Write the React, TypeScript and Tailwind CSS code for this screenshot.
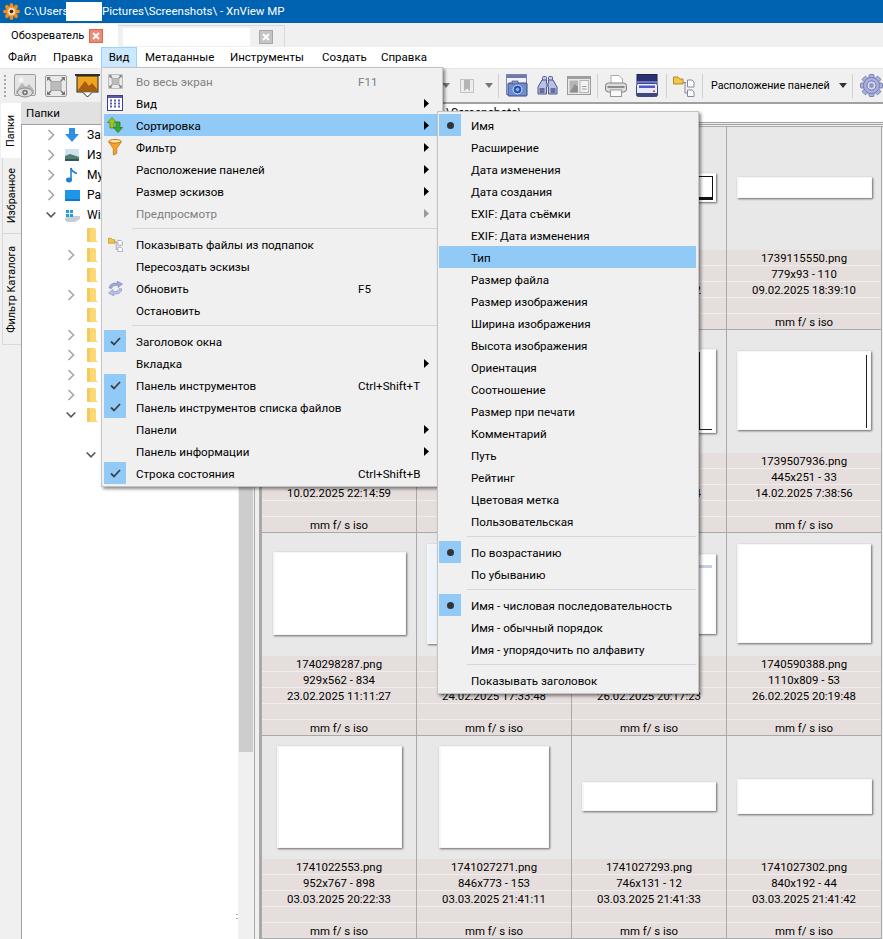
import type { ReactNode } from "react";

type MenuRow = {
  label?: string;
  shortcut?: string;
  arrow?: boolean;
  icon?: ReactNode;
  mark?: "check" | "dot";
  disabled?: boolean;
  active?: boolean;
  separator?: boolean;
};

const Triangle = ({ disabled }: { disabled?: boolean }) => (
  <svg width="5" height="9" viewBox="0 0 5 9">
    <path d="M0 0 L5 4.5 L0 9 Z" fill={disabled ? "#9a9a9a" : "#000"} />
  </svg>
);

const DropArrow = ({ color = "#444" }: { color?: string }) => (
  <svg width="8" height="5" viewBox="0 0 8 5" className="block">
    <path d="M0 0 H8 L4 5 Z" fill={color} />
  </svg>
);

const FullscreenIcon = ({ size = 22 }: { size?: number }) => (
  <svg width={size} height={size} viewBox="0 0 22 22">
    <rect x="0.5" y="0.5" width="21" height="21" rx="1.5" fill="#e9e9e9" stroke="#9a9a9a" />
    <rect x="6" y="6.5" width="10" height="9" fill="#bcbcbc" stroke="#a5a5a5" />
    <path d="M2.5 2.5 L6 6 M19.5 2.5 L16 6 M2.5 19.5 L6 16 M19.5 19.5 L16 16" stroke="#777" strokeWidth="1.6" />
    <path d="M2 2 H6 L2 6 Z M20 2 H16 L20 6 Z M2 20 H6 L2 16 Z M20 20 H16 L20 16 Z" fill="#777" />
  </svg>
);

const PhotoEyeIcon = () => (
  <svg width="22" height="24" viewBox="0 0 22 24">
    <rect x="0.5" y="0.5" width="21" height="21" rx="1.5" fill="#e4e4e4" stroke="#9c9c9c" />
    <path d="M2 17 L8 9 L12 13 L15 10 L20 16 V20 H2 Z" fill="#b8b8b8" />
    <circle cx="7" cy="6" r="2.5" fill="#f5f5f5" />
    <ellipse cx="11" cy="18.5" rx="7.5" ry="4.5" fill="#dcdcdc" stroke="#8c8c8c" />
    <circle cx="11" cy="18.5" r="2.8" fill="#777" />
    <circle cx="11" cy="18.5" r="1.1" fill="#eee" />
  </svg>
);

const ImageScreenIcon = () => (
  <svg width="25" height="24" viewBox="0 0 25 24">
    <rect x="0" y="0" width="25" height="2" fill="#333" />
    <rect x="2" y="2" width="21" height="16" fill="#f1a51f" stroke="#222" />
    <path d="M3 16 L10 7 L14 12 L17 9 L22 15 V17 H3 Z" fill="#a85e10" />
    <path d="M8 18.5 L12.5 23 L17 18.5" fill="#fff" stroke="#222" />
  </svg>
);

const BookmarkIcon = () => (
  <svg width="14" height="14" viewBox="0 0 14 14">
    <rect x="0.5" y="0.5" width="13" height="13" fill="#ededed" stroke="#c3c3c3" />
    <path d="M4 1 H10 V12 L7 9.5 L4 12 Z" fill="#b4b4b4" />
  </svg>
);

const WindowCameraIcon = () => (
  <svg width="22" height="23" viewBox="0 0 22 23">
    <rect x="0.5" y="0.5" width="20" height="20" fill="#eef3fb" stroke="#7d84b0" />
    <rect x="1" y="1" width="19" height="3" fill="#6f78ad" />
    <rect x="2" y="9" width="19" height="13" rx="1" fill="#6d8ed0" stroke="#3c4678" />
    <rect x="6" y="7" width="6" height="3" fill="#8b94c5" stroke="#3c4678" strokeWidth="0.6" />
    <circle cx="11.5" cy="15.5" r="4.4" fill="#2554b0" stroke="#d6e0f5" />
    <circle cx="11.5" cy="15.5" r="1.8" fill="#7fb0f0" />
  </svg>
);

const BinocularsIcon = () => (
  <svg width="21" height="19" viewBox="0 0 21 19">
    <rect x="5.5" y="0.5" width="4" height="4" rx="1" fill="#c6cdea" stroke="#565c90" />
    <rect x="11.5" y="0.5" width="4" height="4" rx="1" fill="#c6cdea" stroke="#565c90" />
    <path d="M5 4 H9.5 V18 H1 V11 Z" fill="#b7c2e6" stroke="#4f5488" />
    <path d="M16 4 H11.5 V18 H20 V11 Z" fill="#b7c2e6" stroke="#4f5488" />
    <rect x="9" y="7" width="3" height="4" fill="#7f86b4" />
    <rect x="2.5" y="12" width="5" height="5" fill="#676da0" />
    <rect x="13.5" y="12" width="5" height="5" fill="#676da0" />
  </svg>
);

const SplitIcon = () => (
  <svg width="24" height="19" viewBox="0 0 24 19">
    <rect x="0.5" y="0.5" width="23" height="18" fill="#e9e9e9" stroke="#9a9a9a" />
    <rect x="0.5" y="0.5" width="23" height="2.5" fill="#9f9f9f" />
    <rect x="2.5" y="4.5" width="8.5" height="12" fill="#b5b5b5" />
    <path d="M2.5 16.5 L8 8 L11 11 V16.5 Z" fill="#8f8f8f" />
    <rect x="13" y="4.5" width="8.5" height="12" fill="#f2f2f2" stroke="#b5b5b5" />
    <rect x="15" y="10" width="4.5" height="1" fill="#9f9f9f" />
    <rect x="15" y="12.5" width="4.5" height="1" fill="#9f9f9f" />
  </svg>
);

const PrinterIcon = () => (
  <svg width="22" height="22" viewBox="0 0 22 22">
    <path d="M6 0.5 H14 L17.5 4 V9 H6 Z" fill="#fff" stroke="#a8a8a8" />
    <rect x="0.5" y="8" width="21" height="9" rx="3" fill="#dcdcdc" stroke="#808080" />
    <rect x="2.5" y="11" width="17" height="2" fill="#8d8d8d" />
    <rect x="5.5" y="15" width="11" height="6.5" fill="#fafafa" stroke="#999" />
  </svg>
);

const ScannerIcon = () => (
  <svg width="22" height="23" viewBox="0 0 22 23">
    <rect x="1" y="0.5" width="20" height="9" fill="#2c3170" stroke="#1f2350" />
    <path d="M1 7 H21 L21 10 H1 Z" fill="#6d75c8" />
    <rect x="0.5" y="9.5" width="21" height="13" rx="2" fill="#e9ecf8" stroke="#40467e" />
    <rect x="3" y="11.5" width="16" height="2.5" fill="#4a57cf" />
    <rect x="0.5" y="19" width="21" height="3.5" rx="1" fill="#41477e" />
    <rect x="17" y="16.5" width="2" height="1.5" fill="#d43a3a" />
  </svg>
);

const FolderTreeIcon = ({ small }: { small?: boolean }) => (
  <svg width={small ? 15 : 22} height={small ? 15 : 22} viewBox="0 0 22 22">
    <path d="M0.5 2 H5 L7 4 H10 V9 H0.5 Z" fill="#f2c64b" stroke="#b88a1e" />
    <path d="M10 7.5 H13 M12 7.5 V18 H14" stroke="#888" fill="none" />
    <path d="M14.5 5 H19 L21 7 V12 H14.5 Z" fill="#fff" stroke="#8289a8" />
    <path d="M14.5 15 H19 L21 17 V21.5 H14.5 Z" fill="#fff" stroke="#8289a8" />
  </svg>
);

const GearIcon = () => (
  <svg width="23" height="23" viewBox="0 0 23 23">
    <g fill="#a9b1dc" stroke="#6a70a8" strokeWidth="0.8">
      {[0, 45, 90, 135, 180, 225, 270, 315].map((a) => (
        <rect key={a} x="9" y="0.5" width="5" height="5" rx="1" transform={`rotate(${a} 11.5 11.5)`} />
      ))}
      <circle cx="11.5" cy="11.5" r="8" />
    </g>
    <circle cx="11.5" cy="11.5" r="4.6" fill="#d9dcf0" stroke="#6a70a8" />
    <circle cx="11.5" cy="11.5" r="2.4" fill="#8f95c4" />
  </svg>
);

const GridViewIcon = () => (
  <svg width="16" height="16" viewBox="0 0 16 16">
    <rect x="0.5" y="0.5" width="15" height="15" fill="#fff" stroke="#3f3f8c" />
    <rect x="1" y="1" width="14" height="2" fill="#5a5aa8" />
    {[4.5, 7.5, 10.5].map((y) =>
      [3, 7, 11].map((x) => <rect key={`${x}-${y}`} x={x} y={y} width="2" height="2" fill="#5757c0" />)
    )}
  </svg>
);

const SortIcon = () => (
  <svg width="16" height="16" viewBox="0 0 16 16">
    <path d="M5 0.5 L9.5 5.5 H7 V11 H3 V5.5 H0.5 Z" fill="#9ac81e" stroke="#4f7a10" strokeWidth="0.7" />
    <path d="M11 15.5 L6.5 10.5 H9 V5 H13 V10.5 H15.5 Z" fill="#3ca82c" stroke="#20701c" strokeWidth="0.7" />
  </svg>
);

const FunnelIcon = () => (
  <svg width="14" height="17" viewBox="0 0 14 17">
    <ellipse cx="7" cy="2.5" rx="6.3" ry="2" fill="#ffe89a" stroke="#c4761a" />
    <path d="M0.8 3 L5.3 9.5 V16 L8.7 14.5 V9.5 L13.2 3 Q7 5.5 0.8 3 Z" fill="#f4a42a" stroke="#b66a14" strokeWidth="0.7" />
  </svg>
);

const RefreshIcon = () => (
  <svg width="15" height="15" viewBox="0 0 15 15">
    <path d="M1 7 Q2 2 7.5 2 L10 2 L9 0 L14.5 3 L10 6.5 L10 4.5 L7.5 4.5 Q4.5 4.5 3.5 7.5 Z" fill="#9fa8dc" stroke="#7078b4" strokeWidth="0.5" />
    <path d="M14 8 Q13 13 7.5 13 L5 13 L6 15 L0.5 12 L5 8.5 L5 10.5 L7.5 10.5 Q10.5 10.5 11.5 7.5 Z" fill="#bcc2e8" stroke="#7078b4" strokeWidth="0.5" />
  </svg>
);

const Logo = () => (
  <svg width="17" height="17" viewBox="0 0 17 17">
    {[0, 45, 90, 135, 180, 225, 270, 315].map((a) => (
      <ellipse key={a} cx="8.5" cy="2.6" rx="2" ry="2.6" fill="#f08a1e" transform={`rotate(${a} 8.5 8.5)`} />
    ))}
    <circle cx="8.5" cy="8.5" r="5" fill="#f5a030" />
    <circle cx="8.5" cy="8.5" r="3.2" fill="#fff" />
    <circle cx="8.5" cy="8.5" r="2" fill="#5a2a0a" />
  </svg>
);

const Close = ({ red }: { red?: boolean }) => (
  <div
    className={
      red
        ? "flex h-[14px] w-[14px] items-center justify-center border border-[#d9674e] bg-[#ee8a73]"
        : "flex h-[14px] w-[14px] items-center justify-center border border-[#a8a8a8] bg-[#c4c4c4]"
    }
  >
    <svg width="8" height="8" viewBox="0 0 8 8">
      <path d="M1 1 L7 7 M7 1 L1 7" stroke="#fff" strokeWidth="2" />
    </svg>
  </div>
);

const ChevronRight = () => (
  <svg width="8" height="12" viewBox="0 0 8 12">
    <path d="M1.5 1 L6.5 6 L1.5 11" fill="none" stroke="#a6a6a6" strokeWidth="1.6" />
  </svg>
);

const ChevronDown = () => (
  <svg width="10" height="8" viewBox="0 0 10 8">
    <path d="M0.7 1.5 L5 5.8 L9.3 1.5" fill="none" stroke="#555" strokeWidth="1.6" />
  </svg>
);

const Folder = () => (
  <svg width="11" height="16" viewBox="0 0 11 16">
    <path d="M0 1 H8 L9 3 V13 L11 15 H0 Z" fill="#fcd975" />
    <path d="M0 1 H3 V15 H0 Z" fill="#f4c95d" />
  </svg>
);

const DownloadsIcon = () => (
  <svg width="14" height="14" viewBox="0 0 14 14">
    <path d="M4 0 H10 V6 H14 L7 14 L0 6 H4 Z" fill="#2f8fe4" />
  </svg>
);

const PicturesIcon = () => (
  <svg width="14" height="12" viewBox="0 0 14 12">
    <rect width="14" height="12" fill="#cfe3ee" />
    <path d="M0 7 L5 5 L14 8 V12 H0 Z" fill="#4f7f66" />
    <rect y="10" width="14" height="2" fill="#34506b" />
  </svg>
);

const MusicIcon = () => (
  <svg width="12" height="16" viewBox="0 0 12 16">
    <path d="M5 1 V12.5" stroke="#1f7fd8" strokeWidth="1.6" />
    <path d="M5 1 Q6 5 11 6.5" fill="none" stroke="#1f7fd8" strokeWidth="1.6" />
    <ellipse cx="3" cy="13" rx="3" ry="2.4" fill="#1f7fd8" />
  </svg>
);

const DesktopIcon = () => (
  <svg width="15" height="11" viewBox="0 0 15 11">
    <rect width="15" height="11" fill="#1d96e8" />
    <rect y="9" width="15" height="2" fill="#0f78c4" />
  </svg>
);

const DriveIcon = () => (
  <svg width="15" height="13" viewBox="0 0 15 13">
    <path d="M0 9 L5 7 H15 V10 L10 13 H2 L0 11 Z" fill="#c8cdd4" />
    <rect x="1" y="1" width="3" height="3" fill="#19a0e8" />
    <rect x="5" y="1" width="3" height="3" fill="#19a0e8" />
    <rect x="1" y="5" width="3" height="3" fill="#19a0e8" />
    <rect x="5" y="5" width="3" height="3" fill="#19a0e8" />
  </svg>
);

const viewMenu: MenuRow[] = [
  { label: "Во весь экран", shortcut: "F11", disabled: true, icon: <FullscreenIcon size={15} /> },
  { label: "Вид", arrow: true, icon: <GridViewIcon /> },
  { label: "Сортировка", arrow: true, active: true, icon: <SortIcon /> },
  { label: "Фильтр", arrow: true, icon: <FunnelIcon /> },
  { label: "Расположение панелей", arrow: true },
  { label: "Размер эскизов", arrow: true },
  { label: "Предпросмотр", arrow: true, disabled: true },
  { separator: true },
  { label: "Показывать файлы из подпапок", icon: <FolderTreeIcon small /> },
  { label: "Пересоздать эскизы" },
  { label: "Обновить", shortcut: "F5", icon: <RefreshIcon /> },
  { label: "Остановить" },
  { separator: true },
  { label: "Заголовок окна", mark: "check" },
  { label: "Вкладка", arrow: true },
  { label: "Панель инструментов", shortcut: "Ctrl+Shift+T", mark: "check" },
  { label: "Панель инструментов списка файлов", mark: "check" },
  { label: "Панели", arrow: true },
  { label: "Панель информации", arrow: true },
  { label: "Строка состояния", shortcut: "Ctrl+Shift+B", mark: "check" },
];

const sortMenu: MenuRow[] = [
  { label: "Имя", mark: "dot" },
  { label: "Расширение" },
  { label: "Дата изменения" },
  { label: "Дата создания" },
  { label: "EXIF: Дата съёмки" },
  { label: "EXIF: Дата изменения" },
  { label: "Тип", active: true },
  { label: "Размер файла" },
  { label: "Размер изображения" },
  { label: "Ширина изображения" },
  { label: "Высота изображения" },
  { label: "Ориентация" },
  { label: "Соотношение" },
  { label: "Размер при печати" },
  { label: "Комментарий" },
  { label: "Путь" },
  { label: "Рейтинг" },
  { label: "Цветовая метка" },
  { label: "Пользовательская" },
  { separator: true },
  { label: "По возрастанию", mark: "dot" },
  { label: "По убыванию" },
  { separator: true },
  { label: "Имя - числовая последовательность", mark: "dot" },
  { label: "Имя - обычный порядок" },
  { label: "Имя - упорядочить по алфавиту" },
  { separator: true },
  { label: "Показывать заголовок" },
];

function MenuItem({ row, wide }: { row: MenuRow; wide?: boolean }) {
  if (row.separator) {
    return (
      <div className="flex h-[9px] items-center pl-[28px]">
        <div className="h-px w-full bg-[#d7d7d7]" />
      </div>
    );
  }
  return (
    <div
      className={`flex h-[22px] items-center text-[11.6px] ${row.active ? "bg-[#91c9f7]" : ""} ${
        row.disabled ? "text-[#808080]" : "text-black"
      }`}
    >
      <div
        className={`flex h-[22px] w-[22px] shrink-0 items-center justify-center ${
          row.mark ? "bg-[#91c9f7]" : ""
        }`}
      >
        {row.icon}
        {row.mark === "check" && (
          <svg width="11" height="9" viewBox="0 0 11 9">
            <path d="M1 4.5 L4 7.5 L10 1" fill="none" stroke="#404040" strokeWidth="1.8" />
          </svg>
        )}
        {row.mark === "dot" && <div className="h-[7px] w-[7px] rounded-full bg-[#333]" />}
      </div>
      <div className={wide ? "ml-[10px] w-[222px] whitespace-nowrap pt-[3px]" : "ml-[10px] whitespace-nowrap pt-[3px]"}>{row.label}</div>
      {wide && <div className="w-[66px] whitespace-nowrap pt-[3px]">{row.shortcut}</div>}
      {row.arrow && <Triangle disabled={row.disabled} />}
    </div>
  );
}

type Shot = {
  name?: string;
  size?: string;
  date?: string;
  w: number;
  h: number;
  body?: ReactNode;
};

const shots: Shot[] = [
  { w: 0, h: 0 },
  { w: 0, h: 0 },
  {
    date: "09.02.2025 18:38:42",
    w: 134,
    h: 29,
    body: <div className="ml-auto mr-[2px] mt-[2px] h-[24px] w-[16px] border border-b-[3px] border-[#111] bg-white" />,
  },
  { name: "1739115550.png", size: "779x93 - 110", date: "09.02.2025 18:39:10", w: 135, h: 21 },
  { date: "10.02.2025 22:14:59", w: 0, h: 0 },
  { w: 0, h: 0 },
  {
    date: "13.02.2025 22:11:14",
    w: 134,
    h: 84,
    body: <div className="ml-auto mr-[3px] mt-[2px] h-[78px] w-[15px] border-b border-l-[3px] border-[#1a1a1a]" />,
  },
  {
    name: "1739507936.png",
    size: "445x251 - 33",
    date: "14.02.2025 7:38:56",
    w: 134,
    h: 79,
    body: <div className="ml-auto mr-[3px] mt-[3px] h-[73px] w-px bg-[#222]" />,
  },
  { name: "1740298287.png", size: "929x562 - 834", date: "23.02.2025 11:11:27", w: 133, h: 83 },
  { date: "24.02.2025 17:33:48", w: 134, h: 100, body: <div className="h-full w-full bg-[#eef3fa]" /> },
  {
    date: "26.02.2025 20:17:23",
    w: 134,
    h: 80,
    body: <div className="ml-auto mr-[3px] mt-[10px] h-[3px] w-[16px] bg-[#c5cfe2]" />,
  },
  { name: "1740590388.png", size: "1110x809 - 53", date: "26.02.2025 20:19:48", w: 134, h: 99 },
  { name: "1741022553.png", size: "952x767 - 898", date: "03.03.2025 20:22:33", w: 125, h: 102 },
  { name: "1741027271.png", size: "846x773 - 153", date: "03.03.2025 21:41:11", w: 110, h: 102 },
  { name: "1741027293.png", size: "746x131 - 12", date: "03.03.2025 21:41:33", w: 134, h: 29 },
  { name: "1741027302.png", size: "840x192 - 44", date: "03.03.2025 21:41:42", w: 135, h: 35 },
];

function Label({ text, last }: { text?: string; last?: boolean }) {
  return (
    <div
      className={`flex items-center justify-center whitespace-nowrap bg-[#e6dedc] pt-[3px] text-[11.4px] leading-none ${
        last ? "h-[15px]" : "h-[16px] border-b border-[#eeeeee]"
      }`}
    >
      {text}
    </div>
  );
}

function Cell({ shot }: { shot: Shot }) {
  return (
    <div className="flex h-[203px] flex-col border-b border-r border-[#a9a9a9]">
      <div className="flex h-[123px] items-center justify-center bg-[#e8e8e8] pb-[2px]">
        {shot.w > 0 && (
          <div
            className="border-b border-l-2 border-r border-t border-[#f6f6f6] bg-white shadow-[1px_1px_2px_rgba(0,0,0,0.55)]"
            style={{ width: shot.w, height: shot.h }}
          >
            {shot.body}
          </div>
        )}
      </div>
      <Label text={shot.name} />
      <Label text={shot.size} />
      <Label text={shot.date} />
      <Label />
      <Label text="mm f/ s iso" last />
    </div>
  );
}

function TreeRow({ indent, chevron, icon, label }: { indent: string; chevron?: "right" | "down"; icon?: ReactNode; label?: string }) {
  return (
    <div className={`flex h-[20px] items-center whitespace-nowrap ${indent}`}>
      <div className="flex w-[10px] shrink-0 items-center justify-center">
        {chevron === "right" && <ChevronRight />}
        {chevron === "down" && <ChevronDown />}
      </div>
      <div className="ml-[8px] flex w-[16px] shrink-0 items-center justify-center">{icon}</div>
      {label && <span className="ml-[7px]">{label}</span>}
    </div>
  );
}

const ToolSep = ({ className }: { className: string }) => <div className={`h-[24px] w-px bg-[#d0d0d0] ${className}`} />;

export default function App() {
  return (
    <div className="relative flex h-[939px] w-[883px] flex-col overflow-hidden bg-[#f0f0f0] font-['Roboto',sans-serif] text-[12px] leading-none text-black">
      {/* title bar */}
      <div className="flex h-[23px] shrink-0 items-center bg-[#0063b1] pl-[3px] text-[11.5px] text-white">
        <Logo />
        <span className="ml-[4px] w-[42px] whitespace-nowrap">C:\Users</span>
        <div className="h-[19px] w-[36px] bg-white" />
        <span>Pictures\Screenshots\ - XnView MP</span>
      </div>

      {/* tabs */}
      <div className="flex h-[24px] shrink-0 items-end">
        <div className="flex h-[23px] w-[118px] items-center bg-white pl-[11px]">
          <span className="w-[78px] whitespace-nowrap text-[11.1px]">Обозреватель</span>
          <Close red />
        </div>
        <div className="flex h-[22px] w-[167px] items-center border-r border-t border-[#d9d9d9] pl-[5px]">
          <div className="h-[18px] w-[127px] bg-white" />
          <div className="ml-[9px]">
            <Close />
          </div>
        </div>
      </div>

      {/* menu bar */}
      <div className="flex h-[21px] shrink-0 items-center bg-white text-[11.5px]">
        <span className="ml-[8px] w-[45px]">Файл</span>
        <span className="w-[48px]">Правка</span>
        <div className="flex h-[21px] w-[36px] items-center justify-center border border-[#99d1ff] bg-[#cce8ff]">Вид</div>
        <span className="ml-[8px] w-[85px]">Метаданные</span>
        <span className="w-[92px]">Инструменты</span>
        <span className="w-[59px]">Создать</span>
        <span>Справка</span>
      </div>

      {/* toolbar */}
      <div className="flex h-[34px] shrink-0 items-center border-t border-[#e8e8e8]">
        <div className="ml-[4px] h-[22px] w-[2px] border-l-2 border-dotted border-[#a8a8a8]" />
        <div className="ml-[8px]">
          <PhotoEyeIcon />
        </div>
        <div className="ml-[9px]">
          <FullscreenIcon />
        </div>
        <div className="ml-[8px]">
          <ImageScreenIcon />
        </div>
        <div className="ml-auto flex items-center">
          <DropArrow color="#777" />
          <div className="ml-[10px]">
            <BookmarkIcon />
          </div>
          <div className="ml-[11px]">
            <DropArrow color="#777" />
          </div>
          <ToolSep className="ml-[5px]" />
          <div className="ml-[7px]">
            <WindowCameraIcon />
          </div>
          <div className="ml-[9px]">
            <BinocularsIcon />
          </div>
          <div className="ml-[9px]">
            <SplitIcon />
          </div>
          <ToolSep className="ml-[6px]" />
          <div className="ml-[7px]">
            <PrinterIcon />
          </div>
          <div className="ml-[9px]">
            <ScannerIcon />
          </div>
          <ToolSep className="ml-[8px]" />
          <div className="ml-[6px]">
            <FolderTreeIcon />
          </div>
          <ToolSep className="ml-[7px]" />
          <span className="ml-[8px] w-[119px] whitespace-nowrap pt-[2px] text-[10.7px]">Расположение панелей</span>
          <div className="ml-[9px]">
            <DropArrow color="#333" />
          </div>
          <ToolSep className="ml-[5px]" />
          <div className="ml-[7px]">
            <GearIcon />
          </div>
        </div>
      </div>

      {/* main */}
      <div className="flex min-h-0 flex-1">
        {/* vertical tabs */}
        <div className="flex w-[21px] shrink-0 flex-col items-end pt-px text-[10.8px]">
          <div className="flex h-[55px] w-[20px] items-center justify-center bg-white">
            <span className="rotate-180 [writing-mode:vertical-rl]">Папки</span>
          </div>
          <div className="flex h-[76px] w-[19px] items-center justify-center border-b border-l border-[#d9d9d9]">
            <span className="rotate-180 whitespace-nowrap [writing-mode:vertical-rl]">Избранное</span>
          </div>
          <div className="flex h-[111px] w-[19px] items-center justify-center border-b border-l border-[#d9d9d9]">
            <span className="rotate-180 whitespace-nowrap [writing-mode:vertical-rl]">Фильтр Каталога</span>
          </div>
        </div>

        {/* folders panel */}
        <div className="flex w-[217px] shrink-0 flex-col">
          <div className="flex h-[22px] items-center bg-[#e1e1e1] pl-[5px] pt-px text-[11.5px]">Папки</div>
          <div className="relative flex-1 border-l border-t border-[#a0a0a0] bg-white">
            <TreeRow indent="pl-[24px]" chevron="right" icon={<DownloadsIcon />} label="Загрузки" />
            <TreeRow indent="pl-[24px]" chevron="right" icon={<PicturesIcon />} label="Изображения" />
            <TreeRow indent="pl-[24px]" chevron="right" icon={<MusicIcon />} label="Музыка" />
            <TreeRow indent="pl-[24px]" chevron="right" icon={<DesktopIcon />} label="Рабочий стол" />
            <TreeRow indent="pl-[24px]" chevron="down" icon={<DriveIcon />} label="Windows (C:)" />
            <TreeRow indent="pl-[44px]" icon={<Folder />} />
            <TreeRow indent="pl-[44px]" chevron="right" icon={<Folder />} />
            <TreeRow indent="pl-[44px]" icon={<Folder />} />
            <TreeRow indent="pl-[44px]" chevron="right" icon={<Folder />} />
            <TreeRow indent="pl-[44px]" icon={<Folder />} />
            <TreeRow indent="pl-[44px]" chevron="right" icon={<Folder />} />
            <TreeRow indent="pl-[44px]" chevron="right" icon={<Folder />} />
            <TreeRow indent="pl-[44px]" chevron="right" icon={<Folder />} />
            <TreeRow indent="pl-[44px]" chevron="right" icon={<Folder />} />
            <TreeRow indent="pl-[44px]" chevron="down" icon={<Folder />} />
            <TreeRow indent="pl-[44px]" />
            <TreeRow indent="pl-[64px]" chevron="down" />
            <span className="absolute bottom-[18px] right-0 text-[9px]">:</span>
          </div>
        </div>

        {/* scrollbar */}
        <div className="flex w-[16px] shrink-0 flex-col bg-[#f0f0f0] pl-px pr-px">
          <div className="mt-[21px] h-[629px] bg-[#cdcdcd]" />
        </div>

        {/* splitter */}
        <div className="h-full w-[7px] shrink-0 border-l border-r-2 border-[#a9a9a9]" />

        {/* file list */}
        <div className="flex min-w-0 flex-1 flex-col">
          <div className="h-[2px] border-b border-t border-[#a0a0a0] bg-[#e8e8e8]" />
          <div className="flex h-[18px] items-center whitespace-nowrap bg-white pl-[185px]">\Screenshots\</div>
          <div className="h-[3px] border-b border-t border-[#a0a0a0]" />
          <div className="h-[1px]" />
          <div className="grid grid-cols-[155px_155px_155px_155px] border-l border-t border-[#a9a9a9]">
            {shots.map((shot, i) => (
              <Cell key={i} shot={shot} />
            ))}
          </div>
        </div>
      </div>

      {/* view menu */}
      <div className="absolute left-[101px] top-[67px] w-[342px] border border-[#c4c4c4] bg-[#f0f0f0] pb-[2px] pl-[2px] pr-[3px] pt-[2px] shadow-[2px_2px_3px_rgba(0,0,0,0.45)]">
        {viewMenu.map((row, i) => (
          <MenuItem key={i} row={row} wide />
        ))}
      </div>

      {/* sort submenu */}
      <div className="absolute left-[437px] top-[111px] w-[262px] border border-[#c4c4c4] bg-[#f0f0f0] pb-[2px] pl-px pr-[2px] pt-[2px] shadow-[2px_2px_3px_rgba(0,0,0,0.45)]">
        {sortMenu.map((row, i) => (
          <MenuItem key={i} row={row} />
        ))}
      </div>
    </div>
  );
}
